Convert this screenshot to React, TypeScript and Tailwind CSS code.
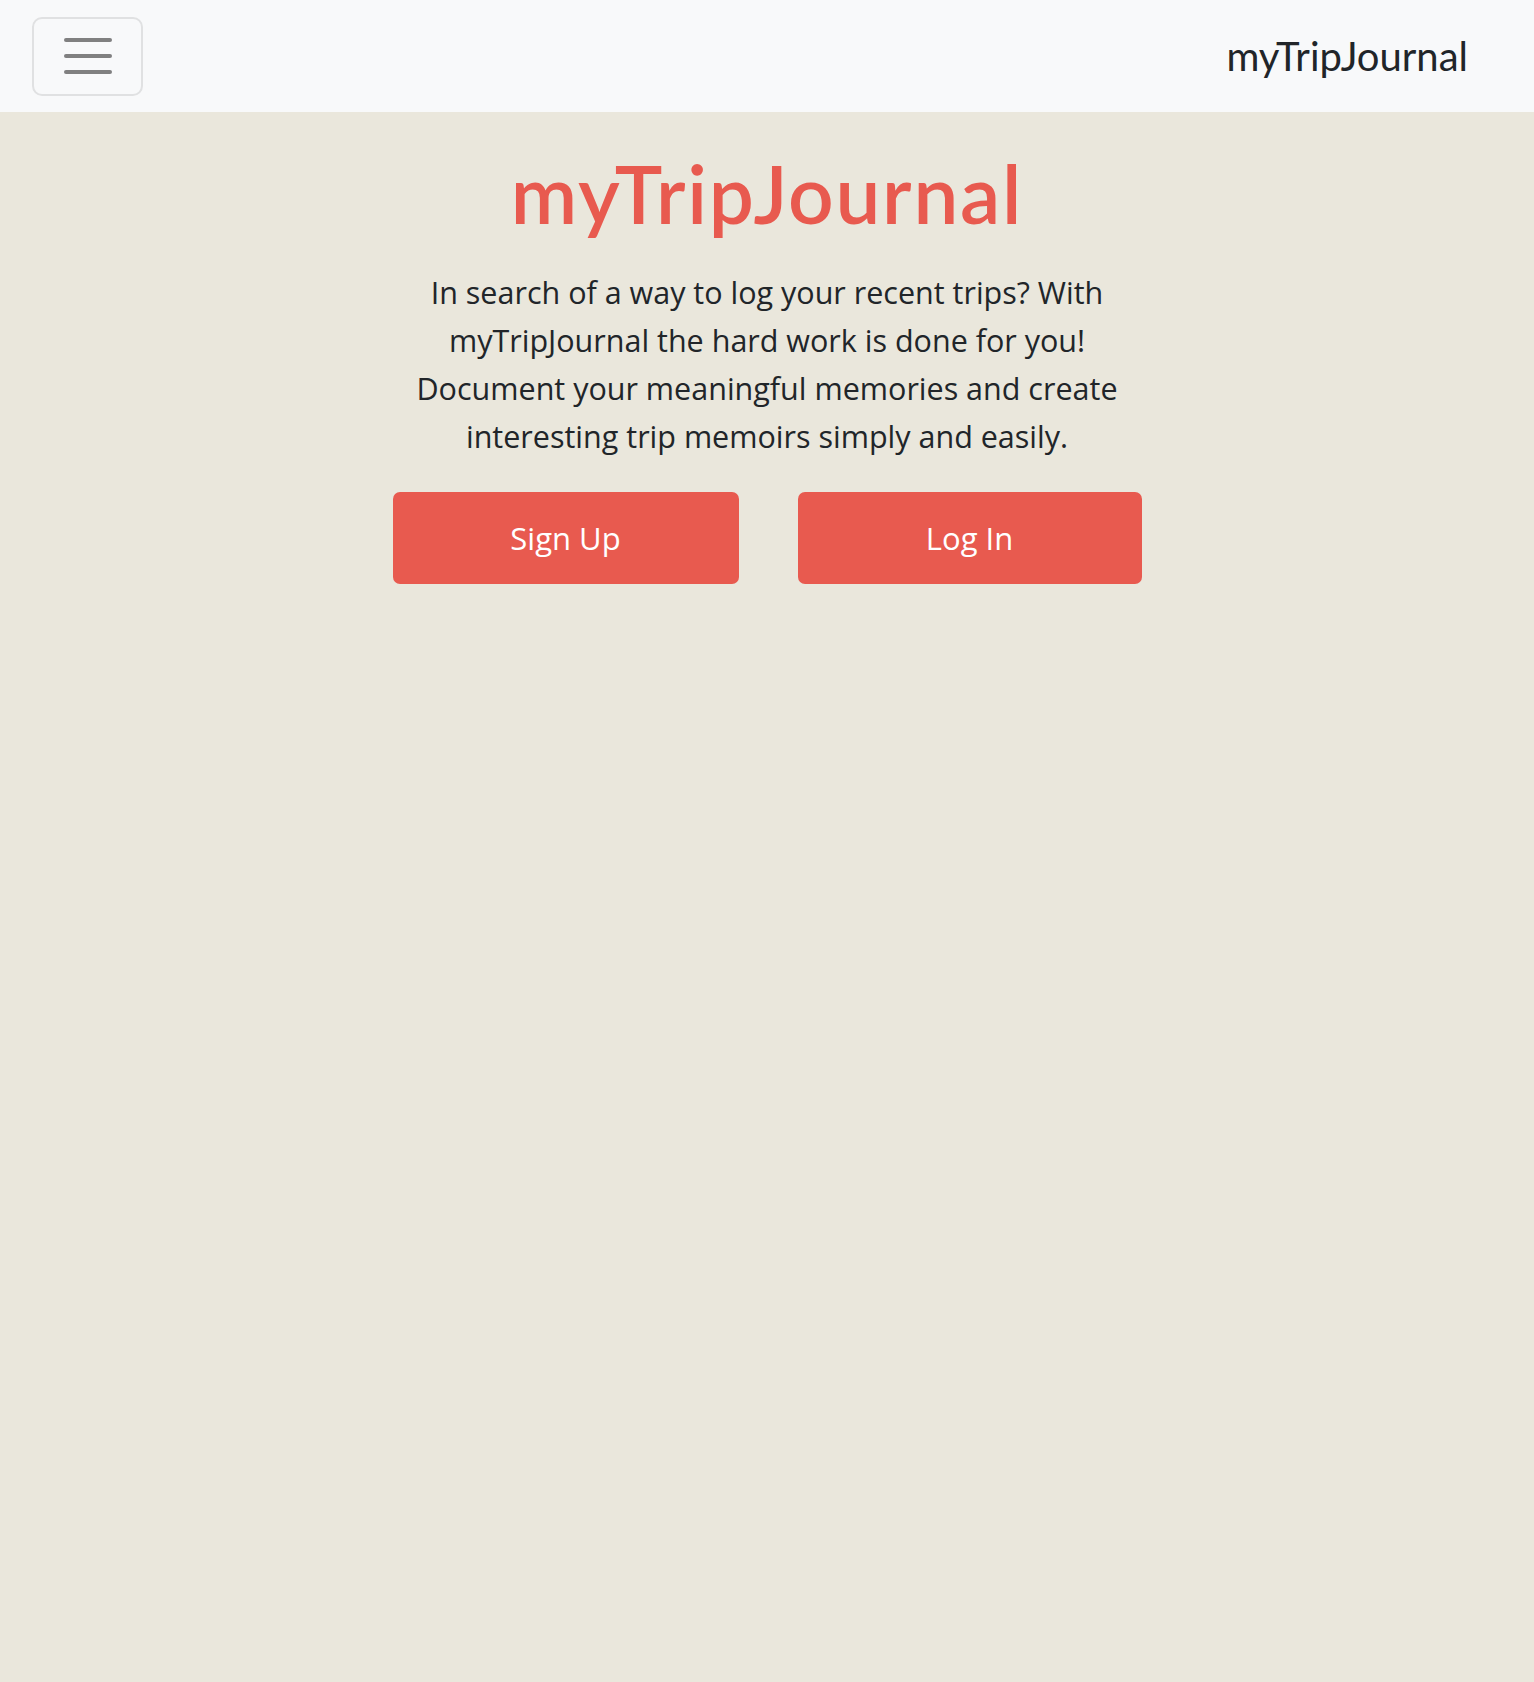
import React from "react";

export default function App() {
  return (
    <div className="min-h-screen bg-[#eae7dc] font-['Open_Sans',sans-serif] text-[#212529]">
      <nav className="h-[112px] bg-[#f8f9fa] flex items-center justify-between pl-[32px] pr-[66px]">
        <button className="w-[111px] h-[79px] border-2 border-[#e0e1e2] rounded-[10px] flex flex-col items-center justify-center gap-[12px]">
          <span className="block w-[48px] h-[4px] bg-[#808080] rounded-full" />
          <span className="block w-[48px] h-[4px] bg-[#808080] rounded-full" />
          <span className="block w-[48px] h-[4px] bg-[#808080] rounded-full" />
        </button>
        <span className="font-['Lato',sans-serif] text-[40px] leading-none text-[#212529]">myTripJournal</span>
      </nav>
      <main className="flex flex-col items-center">
        <h1 className="mt-[33px] font-['Lato',sans-serif] text-[80px] leading-[96px] font-semibold tracking-[1.8px] text-[#e85a4f]">
          myTripJournal
        </h1>
        <p className="mt-[27px] w-[740px] text-center text-[30.5px] leading-[48px]">
          In search of a way to log your recent trips? With myTripJournal the hard work is done for you! Document your meaningful memories and create interesting trip memoirs simply and easily.
        </p>
        <div className="mt-[32px] flex gap-[59px]">
          <button className="w-[346px] h-[92px] rounded-[7px] bg-[#e85a4f] text-white text-[31px]">
            Sign Up
          </button>
          <button className="w-[344px] h-[92px] rounded-[7px] bg-[#e85a4f] text-white text-[31px]">
            Log In
          </button>
        </div>
      </main>
    </div>
  );
}
